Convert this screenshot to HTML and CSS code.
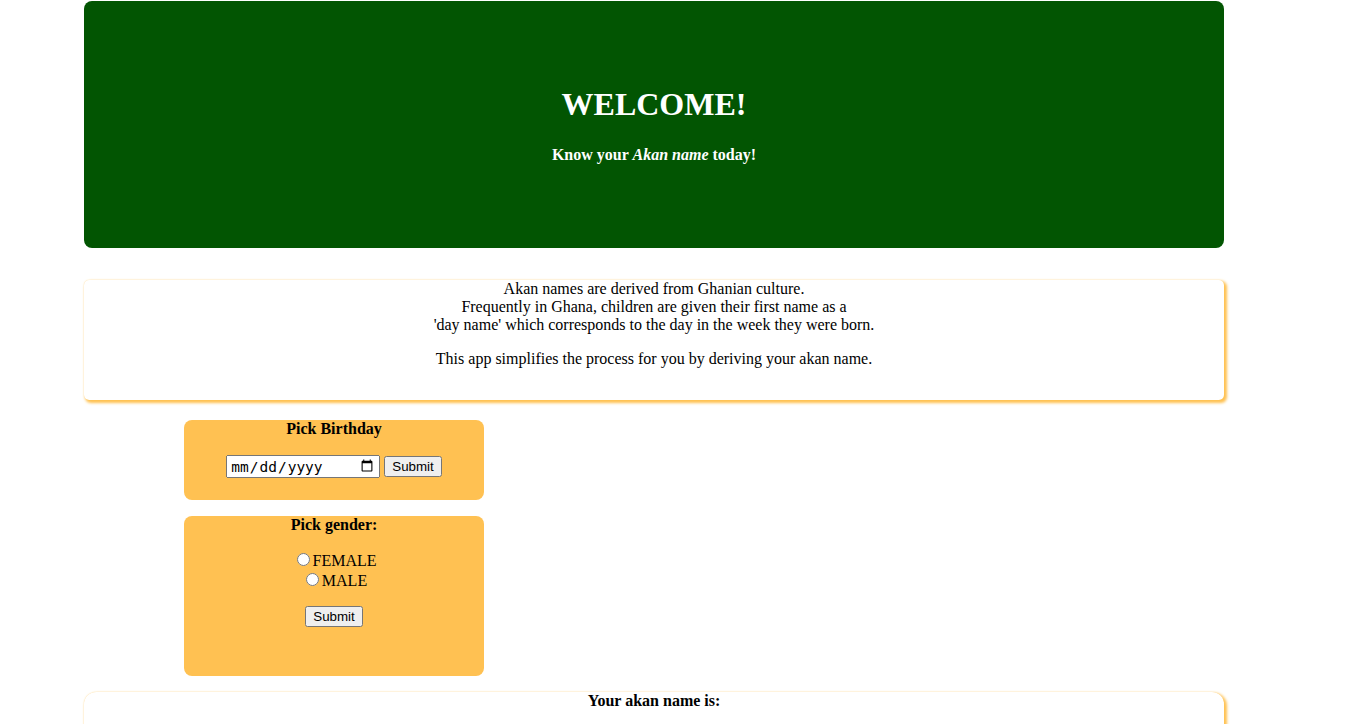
FILE: index.html
```html
<!DOCTYPE html>
<html>
<head>
<meta charset="utf-8">
<title>Akan names</title>
<link rel="stylesheet" href="styles.css">
</head>
<body>
<div class="page">
  <header class="hero">
    <h1 class="hero-title">WELCOME!</h1>
    <p class="hero-sub">Know your <em>Akan name</em> today!</p>
  </header>

  <section class="about">
    <p class="about-text">Akan names are derived from Ghanian culture.<br>Frequently in Ghana, children are given their first name as a<br>'day name' which corresponds to the day in the week they were born.</p>
    <p class="about-text">This app simplifies the process for you by deriving your akan name.</p>
  </section>

  <div class="forms">
    <form class="card card-birthday">
      <h4 class="card-title">Pick Birthday</h4>
      <div class="date-row">
        <input type="date" class="date-input">
        <button type="button" class="btn">Submit</button>
      </div>
    </form>

    <form class="card card-gender">
      <h4 class="card-title">Pick gender:</h4>
      <div class="radios">
        <label class="radio-line"><input type="radio" name="gender">FEMALE</label>
        <label class="radio-line"><input type="radio" name="gender">MALE</label>
      </div>
      <button type="button" class="btn">Submit</button>
    </form>
  </div>

  <section class="result">
    <h4 class="card-title">Your akan name is:</h4>
  </section>
</div>
</body>
</html>
```

FILE: styles.css
```css
html, body {
  margin: 0;
  padding: 0;
  background: #ffffff;
}

body {
  font-family: "Liberation Serif", "Times New Roman", serif;
  font-size: 16px;
  color: #000;
}

.page {
  width: 1140px;
  margin-left: 84px;
  padding-top: 1px;
}

.hero {
  background: #025502;
  border-radius: 8px;
  height: 247px;
  box-sizing: border-box;
  padding-top: 85px;
  text-align: center;
  color: #ffffff;
}

.hero-title {
  margin: 0 0 23px;
  font-size: 32px;
  font-weight: bold;
  line-height: 37px;
}

.hero-sub {
  margin: 0;
  font-weight: bold;
  line-height: 18px;
}

.about {
  margin-top: 32px;
  height: 120px;
  box-sizing: border-box;
  border-radius: 5px;
  box-shadow: 2px 2px 3px 1px #ffc14f, 0 0 1px rgba(255, 193, 79, 0.6);
  text-align: center;
}

.about-text {
  margin: 0 0 16px;
  line-height: 18px;
}

.forms {
  margin-left: 100px;
  width: 300px;
  padding-top: 20px;
  display: flex;
  flex-direction: column;
  gap: 16px;
}

.card {
  background: #ffc152;
  border-radius: 8px;
  text-align: center;
  margin: 0;
  box-sizing: border-box;
}

.card-birthday {
  height: 80px;
}

.card-gender {
  height: 160px;
}

.card-title {
  margin: 0;
  font-size: 16px;
  font-weight: bold;
  line-height: 18px;
}

.date-row {
  margin-top: 17px;
  display: flex;
  justify-content: center;
  align-items: center;
  gap: 4px;
}

.date-input {
  margin: 0;
  width: 154px;
  height: 23px;
  padding: 0 2px;
  box-sizing: border-box;
  font-family: "DejaVu Sans Mono", monospace;
  font-size: 14.5px;
}

.btn {
  margin: 0;
}

.radios {
  margin-top: 16px;
  display: flex;
  flex-direction: column;
  align-items: center;
  margin-bottom: 16px;
}

.radio-line {
  display: block;
  height: 20px;
  line-height: 20px;
}

.radio-line input {
  margin: 3px 3px 0 5px;
}

.result {
  margin-top: 16px;
  height: 60px;
  border-radius: 12px;
  box-shadow: 2px 2px 3px 1px #ffc14f, 0 0 1px rgba(255, 193, 79, 0.6);
  text-align: center;
}
```
